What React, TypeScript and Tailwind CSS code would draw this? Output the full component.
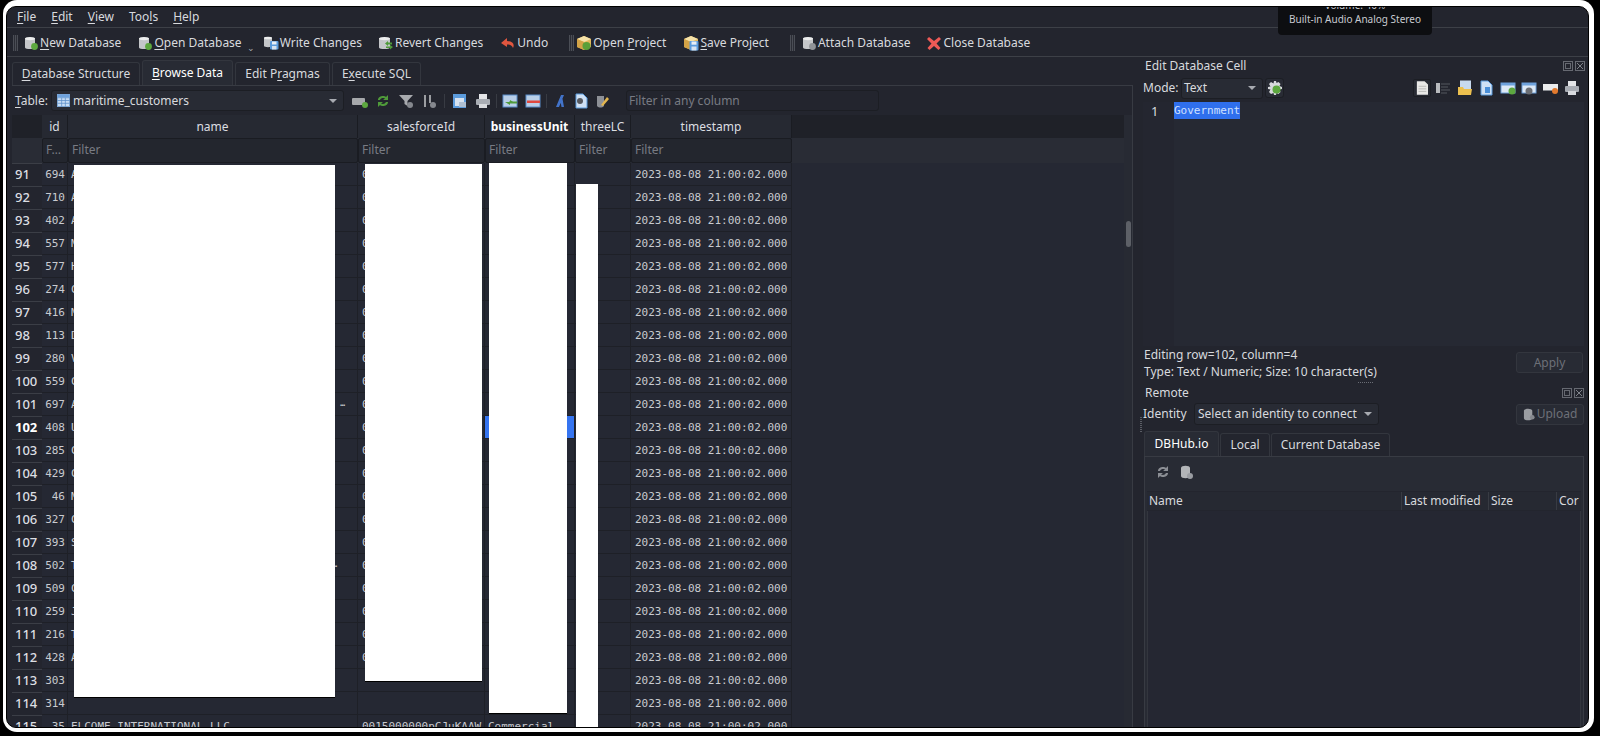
import React from "react";

const Mn: React.FC<{ children: React.ReactNode }> = ({ children }) => (
  <span className="underline underline-offset-2">{children}</span>
);

/* ---- icons ---- */
const Db: React.FC<{ badge?: string }> = ({ badge }) => (
  <svg viewBox="0 0 16 16" className="w-[16px] h-[16px] shrink-0">
    <path d="M2 3.5C2 2 12 2 12 3.5V12.5C12 14.5 2 14.5 2 12.5Z" fill="#c4c6c9" />
    <ellipse cx="7" cy="3.6" rx="5" ry="1.6" fill="#eceded" />
    {badge && <circle cx="11.5" cy="11.5" r="3.4" fill={badge} />}
  </svg>
);

const WriteIcon = () => (
  <svg viewBox="0 0 16 16" className="w-[16px] h-[16px] shrink-0">
    <path d="M1 3C1 1.8 9 1.8 9 3V11C9 12.5 1 12.5 1 11Z" fill="#c4c6c9" />
    <ellipse cx="5" cy="3" rx="4" ry="1.3" fill="#eceded" />
    <rect x="7" y="6" width="8.5" height="8.5" rx="1" fill="#5b9bdc" />
    <rect x="9" y="6.5" width="4.5" height="3" fill="#e8eef5" />
    <rect x="9" y="11" width="4.5" height="3.5" fill="#d7e3f0" />
  </svg>
);

const RevertIcon = () => (
  <svg viewBox="0 0 16 16" className="w-[16px] h-[16px] shrink-0">
    <path d="M1 3.5C1 2 12 2 12 3.5V12.5C12 14.5 1 14.5 1 12.5Z" fill="#c4c6c9" />
    <ellipse cx="6.5" cy="3.6" rx="5.5" ry="1.6" fill="#eceded" />
    <path d="M7 8.5L10 6V7.5H14V9.5H10V11ZM15 12L12 14.5V13H8V11.5H12V10Z" fill="#4f9a3a" />
  </svg>
);

const UndoIcon = () => (
  <svg viewBox="0 0 16 16" className="w-[16px] h-[16px] shrink-0">
    <path d="M7 3L1 8L7 12V9.5C10 9.5 12 10.5 13 13C15 9 12.5 6.2 7 6Z" fill="#e0563f" />
  </svg>
);

const BoxIcon: React.FC<{ badge?: boolean; save?: boolean }> = ({ badge, save }) => (
  <svg viewBox="0 0 16 16" className="w-[16px] h-[16px] shrink-0">
    <path d="M8 1L15 4V12L8 15L1 12V4Z" fill="#e2b85c" />
    <path d="M8 1L15 4L8 7L1 4Z" fill="#f6e2a8" />
    <path d="M8 7V15L1 12V4Z" fill="#d3a347" />
    {badge && <circle cx="10.5" cy="11" r="4" fill="#5a9f38" />}
    {save && (
      <g>
        <rect x="6.5" y="6" width="9" height="9.5" rx="1" fill="#5b9bdc" />
        <rect x="8.5" y="6.5" width="5" height="3.2" fill="#e8eef5" />
        <rect x="8.5" y="11.5" width="5" height="4" fill="#d7e3f0" />
      </g>
    )}
  </svg>
);

const CloseIcon = () => (
  <svg viewBox="0 0 16 16" className="w-[16px] h-[16px] shrink-0">
    <path d="M3 2L8 6L13 2L15 4L10.5 8.5L14.5 13L12.5 15L8 11L3.5 15L1.5 13L5.5 8.5L1 4Z" fill="#ee5a56" />
  </svg>
);

const Handle = () => (
  <div className="w-[5px] h-[16px] shrink-0 bg-[repeating-linear-gradient(90deg,#4b4e56_0_1px,#2c2e36_1px_2px)]" />
);

const TableIcon = () => (
  <svg viewBox="0 0 14 14" className="w-[13px] h-[13px] shrink-0">
    <rect x="0.5" y="0.5" width="13" height="13" fill="#c6dcf4" stroke="#7fa9d8" />
    <path d="M0.5 4H13.5M0.5 7H13.5M0.5 10H13.5M5 4V13.5M9 4V13.5" stroke="#5b8dc9" strokeWidth="0.8" />
    <rect x="0.5" y="0.5" width="13" height="3" fill="#6ea2dc" />
  </svg>
);

const TB = ({ children }: { children: React.ReactNode }) => (
  <svg viewBox="0 0 16 16" className="w-[16px] h-[16px] shrink-0">
    {children}
  </svg>
);

const Caret = () => (
  <svg viewBox="0 0 8 4" className="w-[8px] h-[4px] shrink-0">
    <path d="M0 0H8L4 4Z" fill="#a8abb1" />
  </svg>
);

const Sep: React.FC<{ className?: string }> = ({ className }) => (
  <div className={`w-px h-[14px] bg-[#383b43] shrink-0 ${className ?? ""}`} />
);

const RemoteDb = () => (
  <svg viewBox="0 0 16 16" className="w-[16px] h-[16px] shrink-0">
    <path d="M2 4C2 1 11 1 11 4V12C11 15 2 15 2 12Z" fill="#b3b5b8" />
    <circle cx="11" cy="12" r="3" fill="#9a9da2" />
  </svg>
);

const DockBtns = () => (
  <div className="flex items-center gap-[2px]">
    <svg viewBox="0 0 10 10" className="w-[10px] h-[10px]">
      <rect x="0.5" y="0.5" width="9" height="9" fill="none" stroke="#666971" />
      <rect x="2.5" y="2.5" width="5" height="5" fill="none" stroke="#666971" />
    </svg>
    <svg viewBox="0 0 10 10" className="w-[10px] h-[10px]">
      <rect x="0.5" y="0.5" width="9" height="9" fill="none" stroke="#666971" />
      <path d="M2 2L8 8M8 2L2 8" stroke="#80838a" />
    </svg>
  </div>
);

/* ---- toolbar ---- */
const ToolItem: React.FC<{ icon: React.ReactNode; className?: string; children: React.ReactNode }> = ({
  icon,
  className,
  children,
}) => (
  <div className={`flex items-center gap-[1px] shrink-0 ${className ?? ""}`}>
    {icon}
    <span>{children}</span>
  </div>
);

/* ---- table data ---- */
const widths = ["w-[30px]", "w-[26px]", "w-[290px]", "w-[127px]", "w-[90px]", "w-[56px]", "w-[161px]"];
const rows: { n: number; id: number; name: string; sf: string; bu?: string; dots?: string }[] = [
  { n: 91, id: 694, name: "A", sf: "0" },
  { n: 92, id: 710, name: "A", sf: "0" },
  { n: 93, id: 402, name: "A", sf: "0" },
  { n: 94, id: 557, name: "M", sf: "0" },
  { n: 95, id: 577, name: "H", sf: "0" },
  { n: 96, id: 274, name: "C", sf: "0" },
  { n: 97, id: 416, name: "M", sf: "0" },
  { n: 98, id: 113, name: "D", sf: "0" },
  { n: 99, id: 280, name: "V", sf: "0" },
  { n: 100, id: 559, name: "C", sf: "0" },
  { n: 101, id: 697, name: "A", sf: "0", dots: "pr-[12px]" },
  { n: 102, id: 408, name: "U", sf: "0" },
  { n: 103, id: 285, name: "C", sf: "0" },
  { n: 104, id: 429, name: "C", sf: "0" },
  { n: 105, id: 46, name: "M", sf: "0" },
  { n: 106, id: 327, name: "C", sf: "0" },
  { n: 107, id: 393, name: "S", sf: "0" },
  { n: 108, id: 502, name: "T", sf: "0", dots: "pr-[20px]" },
  { n: 109, id: 509, name: "C", sf: "0" },
  { n: 110, id: 259, name: "J", sf: "0" },
  { n: 111, id: 216, name: "T", sf: "0" },
  { n: 112, id: 428, name: "A", sf: "0" },
  { n: 113, id: 303, name: "", sf: "" },
  { n: 114, id: 314, name: "", sf: "" },
  { n: 115, id: 35, name: "ELCOME INTERNATIONAL LLC", sf: "0015000000pCJuKAAW", bu: "Commercial" },
];

const headers = ["", "id", "name", "salesforceId", "businessUnit", "threeLC", "timestamp"];
const filters = ["", "F…", "Filter", "Filter", "Filter", "Filter", "Filter"];

const DataTable = () => (
  <div className="relative flex-1 min-w-0 overflow-hidden">
    {/* header strip */}
    <div className="flex h-[23px] bg-[#1f2128]">
      {headers.map((h, i) => (
        <div
          key={i}
          className={`${widths[i]} shrink-0 flex items-center justify-center overflow-hidden ${
            i === 0 ? "" : "bg-[#262932] border-r border-[#1a1c22]"
          } ${i === 4 ? "font-bold text-white" : "text-[#dcdee2]"}`}
        >
          {h}
        </div>
      ))}
    </div>
    {/* filter row */}
    <div className="flex h-[25px] bg-[#292c35]">
      {filters.map((f, i) => (
        <div
          key={i}
          className={`${widths[i]} shrink-0 flex items-center overflow-hidden pl-[3px] pb-[2px] text-[#787b83] ${
            i === 0 ? "" : "bg-[#23262e] border border-[#1a1c22] rounded-[2px]"
          }`}
        >
          {f}
        </div>
      ))}
    </div>
    {/* rows */}
    <div className="bg-[#252833]">
      {rows.map((r) => (
        <div key={r.n} className="flex h-[23px] font-['DejaVu_Sans_Mono'] text-[11px] text-[#c9cbd0]">
          <div
            className={`${widths[0]} shrink-0 flex items-center pl-[3px] pb-[2px] border-t border-[#3b3e46] bg-[#23252e] font-['Noto_Sans'] text-[13px] ${
              r.n === 102 ? "font-bold text-white" : "font-medium text-[#dcdee2]"
            }`}
          >
            {r.n}
          </div>
          <div className={`${widths[1]} shrink-0 flex items-center justify-end pr-[2px] border-b border-r border-[#1e2027]`}>
            {r.id}
          </div>
          <div
            className={`${widths[2]} shrink-0 flex items-center justify-between pl-[3px] border-b border-r border-[#1e2027] ${r.dots ?? ""}`}
          >
            <span>{r.name}</span>
            {r.dots && <span className="text-[8px] font-bold">…</span>}
          </div>
          <div className={`${widths[3]} shrink-0 flex items-center pl-[4px] border-b border-r border-[#1e2027]`}>{r.sf}</div>
          <div
            className={`${widths[4]} shrink-0 flex items-center pl-[3px] border-b border-r border-[#1e2027] ${
              r.n === 102 ? "bg-[#3574f0]" : ""
            }`}
          >
            {r.bu}
          </div>
          <div className={`${widths[5]} shrink-0 border-b border-r border-[#1e2027]`} />
          <div className={`${widths[6]} shrink-0 flex items-center pl-[4px] border-b border-r border-[#1e2027]`}>
            2023-08-08 21:00:02.000
          </div>
        </div>
      ))}
    </div>
    {/* redaction boxes laid over the grid */}
    <div className="absolute left-[62px] top-[50px] w-[261px] h-[532px] bg-white shadow-[0_1px_0_#000]" />
    <div className="absolute left-[353px] top-[49px] w-[117px] h-[517px] bg-white shadow-[0_1px_0_#000]" />
    <div className="absolute left-[477px] top-[48px] w-[78px] h-[550px] bg-white shadow-[0_1px_0_#000]" />
    <div className="absolute left-[564px] top-[69px] w-[22px] h-[560px] bg-white" />
  </div>
);

const TabBtn: React.FC<{ active?: boolean; className: string; children: React.ReactNode }> = ({
  active,
  className,
  children,
}) => (
  <div
    className={`flex items-center justify-center rounded-t-[3px] border border-b-0 border-[#33363e] ${className} ${
      active ? "h-[25px] bg-[#282b34] text-white" : "h-[23px] bg-[#23252e]"
    }`}
  >
    {children}
  </div>
);

export default function App() {
  return (
    <div className="w-[1600px] h-[736px] bg-black pl-[3px] pr-[6px] pb-[4px] overflow-hidden">
      <div className="h-full bg-white rounded-[14px] pt-[6px] pl-[3px] pr-[5px] pb-[4px]">
        <div className="relative h-full border border-black rounded-[10px] overflow-hidden bg-[#23252e] text-[12px] leading-none text-[#d8dade] font-['Noto_Sans',sans-serif] flex flex-col">
          {/* volume popup from the desktop */}
          <div className="absolute left-[1271px] top-0 w-[154px] h-[28px] bg-[#0d0e11] rounded-b-[4px] overflow-hidden flex flex-col items-center text-[10px] text-[#c8cad0] z-10">
            <span className="-mt-[7px]">Volume: 40%</span>
            <span className="mt-[4px]">Built-in Audio Analog Stereo</span>
          </div>

          {/* splitter grips */}
          <div className="absolute left-[1133px] top-[410px] w-[2px] h-[15px] bg-[repeating-linear-gradient(0deg,#5a5d65_0_1px,transparent_1px_2px)]" />
          <div className="absolute left-[1351px] top-[375px] w-[15px] h-[1px] bg-[repeating-linear-gradient(90deg,#6a6d75_0_1px,transparent_1px_2px)]" />

          {/* menu bar */}
          <div className="h-[21px] shrink-0 flex items-center gap-[15px] pl-[10px] border-b border-[#3d4047]">
            <span><Mn>F</Mn>ile</span>
            <span><Mn>E</Mn>dit</span>
            <span><Mn>V</Mn>iew</span>
            <span>Too<Mn>l</Mn>s</span>
            <span><Mn>H</Mn>elp</span>
          </div>

          {/* main toolbar */}
          <div className="h-[29px] shrink-0 flex items-center pl-[6px] pt-[2px] border-b border-[#3d4047]">
            <Handle />
            <ToolItem className="ml-[5px]" icon={<Db badge="#5da83f" />}><Mn>N</Mn>ew Database</ToolItem>
            <ToolItem className="ml-[16px]" icon={<Db badge="#5da83f" />}><Mn>O</Mn>pen Database</ToolItem>
            <span className="ml-[5px] mt-[9px] text-[9px] text-[#a8abb1]">⌄</span>
            <ToolItem className="ml-[8px]" icon={<WriteIcon />}>Write Changes</ToolItem>
            <ToolItem className="ml-[16px]" icon={<RevertIcon />}>Revert Changes</ToolItem>
            <ToolItem className="ml-[17px]" icon={<UndoIcon />}>Undo</ToolItem>
            <div className="ml-[21px]"><Handle /></div>
            <ToolItem className="ml-[2px]" icon={<BoxIcon badge />}>Open <Mn>P</Mn>roject</ToolItem>
            <ToolItem className="ml-[17px]" icon={<BoxIcon save />}><Mn>S</Mn>ave Project</ToolItem>
            <div className="ml-[21px]"><Handle /></div>
            <ToolItem className="ml-[6px]" icon={<Db badge="#8f9297" />}>Attach Database</ToolItem>
            <ToolItem className="ml-[16px]" icon={<CloseIcon />}>Close Database</ToolItem>
          </div>

          {/* work area */}
          <div className="flex-1 min-h-0 flex">
            {/* browse panel */}
            <div className="w-[1126px] shrink-0 pl-[5px] flex flex-col">
              <div className="h-[28px] shrink-0 flex items-end gap-[2px] pb-0">
                <TabBtn className="w-[128px]"><span><Mn>D</Mn>atabase Structure</span></TabBtn>
                <TabBtn active className="w-[91px]"><span><Mn>B</Mn>rowse Data</span></TabBtn>
                <TabBtn className="w-[95px]"><span>Edit P<Mn>r</Mn>agmas</span></TabBtn>
                <TabBtn className="w-[89px]"><span>E<Mn>x</Mn>ecute SQL</span></TabBtn>
              </div>
              <div className="flex-1 min-h-0 flex flex-col border-t border-r border-[#383b43]">
                {/* table toolbar */}
                <div className="h-[29px] shrink-0 flex items-center pl-[3px]">
                  <span className="w-[36px]"><Mn>T</Mn>able:</span>
                  <div className="w-[293px] h-[21px] flex items-center pl-[5px] pr-[6px] bg-[#282b34] border border-[#1c1e24] rounded-[3px]">
                    <TableIcon />
                    <span className="ml-[3px] flex-1">maritime_customers</span>
                    <Caret />
                  </div>
                  <div className="ml-[8px] flex items-center gap-[7px] w-[270px]">
                    <TB>
                      <rect x="0" y="5" width="13" height="7" rx="1" fill="#a6a8ab" />
                      <circle cx="13" cy="12" r="3" fill="#5da83f" />
                    </TB>
                    <TB>
                      <path d="M3 7C3 3 9 2 11 4L13 2V7H8L10 5.5C8 4.5 6 5 5 7ZM13 9C13 13 7 14 5 12L3 14V9H8L6 10.5C8 11.5 10 11 11 9Z" fill="#4f9a3a" />
                    </TB>
                    <TB>
                      <path d="M1 2H15L9.5 8V13L6.5 11V8Z" fill="#a8aaae" />
                      <circle cx="12" cy="12" r="3" fill="#85888e" />
                    </TB>
                    <TB>
                      <path d="M3 2H5V14H3ZM8 2H10V10H8Z" fill="#9b9da1" />
                      <circle cx="12" cy="12" r="3" fill="#85888e" />
                    </TB>
                    <Sep />
                    <TB>
                      <rect x="1" y="1" width="13" height="14" fill="#5b9bdc" />
                      <rect x="3" y="5" width="9" height="8" fill="#d7e3f0" />
                      <rect x="7" y="9" width="7" height="5" fill="#aebfd2" />
                    </TB>
                    <TB>
                      <rect x="4" y="1" width="8" height="5" fill="#e4e5e8" />
                      <rect x="1" y="6" width="14" height="6" rx="1" fill="#a9adb4" />
                      <rect x="4" y="11" width="8" height="4" fill="#d8dade" />
                    </TB>
                    <Sep className="-mx-[2px]" />
                    <TB>
                      <rect x="1" y="2" width="14" height="12" fill="#b9cfe8" stroke="#5b8dc9" />
                      <path d="M3 9H8V7L12 9.5H8V12Z" fill="#4f9a3a" />
                      <rect x="7" y="8.5" width="8" height="2" fill="#4f9a3a" />
                    </TB>
                    <TB>
                      <rect x="1" y="2" width="14" height="12" fill="#b9cfe8" stroke="#5b8dc9" />
                      <rect x="2" y="7.5" width="13" height="2.5" fill="#e0483f" />
                    </TB>
                    <Sep className="-mx-[2px]" />
                    <TB>
                      <path d="M9 2H12L7 14H4ZM10 3L12 14H9.5L8 6Z" fill="#4273c9" />
                    </TB>
                    <div className="-mx-[2px]">
                      <TB>
                        <path d="M3 1H10L14 5V15H3Z" fill="#cfe1f5" stroke="#5b9bdc" />
                        <circle cx="7" cy="8" r="3" fill="#55585f" />
                      </TB>
                    </div>
                    <TB>
                      <path d="M3 3H10V13C8 15 5 15 3 13Z" fill="#8d9096" />
                      <path d="M7 12L13 4L15 6L9 13Z" fill="#e3b64f" />
                    </TB>
                  </div>
                  <div className="ml-[4px] w-[253px] h-[21px] flex items-center pl-[2px] bg-[#23252e] border border-[#1c1e24] rounded-[3px] text-[#787b83]">
                    Filter in any column
                  </div>
                </div>

                {/* grid + scrollbar */}
                <div className="flex-1 min-h-0 flex">
                  <DataTable />
                  <div className="w-[8px] shrink-0 pt-[106px] flex justify-center bg-[#272a33]">
                    <div className="w-[5px] h-[26px] rounded-full bg-[#5d6067]" />
                  </div>
                </div>
              </div>
            </div>

            {/* right dock */}
            <div className="flex-1 min-w-0 pl-[10px] pr-[3px] flex flex-col">
              <div className="h-[18px] shrink-0 flex items-center justify-between pl-[2px]">
                <span>Edit Database Cell</span>
                <DockBtns />
              </div>
              <div className="h-[26px] shrink-0 flex items-center">
                <span className="w-[38px]">Mode:</span>
                <div className="w-[82px] h-[21px] flex items-center pl-[2px] pr-[6px] justify-between border border-[#1c1e24] bg-[#282b34] rounded-[3px]">
                  <span>Text</span>
                  <Caret />
                </div>
                <div className="ml-[2px] w-[19px] h-[20px] flex items-center justify-center border border-[#1c1e24] bg-[#282b34] rounded-[3px]">
                  <svg viewBox="0 0 14 14" className="w-[14px] h-[14px]">
                    <path d="M6 0H8L8.5 2L10.5 1L12.5 3L11.5 5L14 6V8L11.5 8.5L12.5 11L10.5 13L8.5 12L8 14H6L5.5 12L3 13L1 11L2.5 8.5L0 8V6L2.5 5.5L1 3L3 1L5.5 2.5Z" fill="#d7d9dc" />
                    <circle cx="8.5" cy="8.5" r="4" fill="#5da83f" />
                  </svg>
                </div>
                <div className="flex-1 flex items-center justify-end gap-[5.5px] pr-[5px]">
                  <div className="w-[18px] h-[18px] -mr-[1px] flex items-center justify-center bg-[#282b34] border border-[#1c1e24] rounded-[2px]">
                    <svg viewBox="0 0 14 16" className="w-[12px] h-[14px]">
                      <path d="M1 0H10L14 4V16H1Z" fill="#e9e9e7" />
                      <path d="M3 6H12M3 9H12M3 12H12" stroke="#b5b5b3" />
                    </svg>
                  </div>
                  <TB>
                    <rect x="1" y="3" width="4" height="10" fill="#b8babd" />
                    <path d="M6 4H15M6 7H13M6 10H15M6 13H12" stroke="#55585f" strokeWidth="1.2" />
                  </TB>
                  <TB>
                    <rect x="3" y="0.5" width="11" height="10" fill="#c8daef" />
                    <path d="M1 7H6L7 9H15L14 15H1Z" fill="#ecc04f" />
                  </TB>
                  <TB>
                    <path d="M3 1H10L14 5V15H3Z" fill="#cfe1f5" stroke="#5b9bdc" />
                    <rect x="7" y="7" width="5" height="6" fill="#4a8fd8" />
                  </TB>
                  <TB>
                    <rect x="1" y="3" width="14" height="10" fill="#dde9f6" stroke="#6ea2dc" />
                    <rect x="1" y="3" width="14" height="2.5" fill="#6ea2dc" />
                    <circle cx="12" cy="11" r="3.5" fill="#5da83f" />
                  </TB>
                  <TB>
                    <rect x="1" y="3" width="14" height="10" fill="#dde9f6" stroke="#6ea2dc" />
                    <rect x="1" y="3" width="14" height="2.5" fill="#6ea2dc" />
                    <circle cx="8" cy="11" r="3.5" fill="#6b6e74" />
                  </TB>
                  <TB>
                    <rect x="0" y="4" width="15" height="6.5" fill="#ecedee" />
                    <circle cx="12" cy="11" r="3" fill="#e27a2e" />
                  </TB>
                  <TB>
                    <rect x="4" y="1" width="8" height="5" fill="#e4e5e8" />
                    <rect x="1" y="6" width="14" height="6" rx="1" fill="#a9adb4" />
                    <rect x="4" y="11" width="8" height="4" fill="#d8dade" />
                  </TB>
                </div>
              </div>
              {/* cell editor */}
              <div className="h-[244px] shrink-0 flex bg-[#262933] mt-[1px] w-[441px]">
                <div className="w-[31px] shrink-0 bg-[#242630] pt-[3px] pl-[8px] text-[13px]">1</div>
                <div className="flex-1 font-['DejaVu_Sans_Mono'] text-[11px]">
                  <span className="inline-block h-[17px] leading-[17px] bg-[#2f6fed] text-[#cfe0ff]">Government</span>
                </div>
              </div>
              {/* status */}
              <div className="h-[42px] shrink-0 flex w-[440px] pt-[6px]">
                <div className="flex-1 flex flex-col gap-[3px] leading-[13px] -mt-[4px] pl-[1px]">
                  <span>Editing row=102, column=4</span>
                  <span className="mt-[1px]">Type: Text / Numeric; Size: 10 character(s)</span>
                </div>
                <div className="w-[67px] h-[21px] flex items-center justify-center border border-[#33363e] bg-[#282b34] rounded-[3px] text-[#6d7078]">
                  Apply
                </div>
              </div>
              {/* remote */}
              <div className="h-[10px] shrink-0 flex items-center justify-between w-[441px] pl-[2px]">
                <span>Remote</span>
                <DockBtns />
              </div>
              <div className="h-[22px] mt-[5px] shrink-0 flex items-center w-[441px]">
                <span className="w-[51px]">Identity</span>
                <div className="w-[185px] h-[22px] flex items-center justify-between pl-[3px] pr-[6px] border border-[#1c1e24] bg-[#282b34] rounded-[3px]">
                  <span className="whitespace-nowrap">Select an identity to connect</span>
                  <Caret />
                </div>
                <div className="ml-auto w-[68px] h-[21px] flex items-center justify-center gap-[1px] border border-[#33363e] bg-[#282b34] rounded-[3px] text-[#6d7078]">
                  <svg viewBox="0 0 14 14" className="w-[13px] h-[13px]">
                    <path d="M1 3C1 0 10 0 10 3V11C10 14 1 14 1 11Z" fill="#9a9da2" />
                    <circle cx="10" cy="10" r="2.5" fill="#85888e" />
                  </svg>
                  Upload
                </div>
              </div>
              <div className="h-[31px] shrink-0 flex items-end gap-[1px] pl-[1px] w-[441px]">
                <TabBtn active className="w-[75px]"><span>DBHub.io</span></TabBtn>
                <TabBtn className="w-[50px]"><span>Local</span></TabBtn>
                <TabBtn className="w-[119px]"><span>Current Database</span></TabBtn>
              </div>
              <div className="flex-1 min-h-0 w-[440px] ml-[1px] border border-[#383b43] border-b-0 bg-[#282b34] flex flex-col pt-[3px] px-[2px]">
                <div className="h-[24px] shrink-0 flex items-center gap-[8px] pl-[8px]">
                  <TB>
                    <path d="M3 7C3 3 9 2 11 4L13 2V7H8L10 5.5C8 4.5 6 5 5 7ZM13 9C13 13 7 14 5 12L3 14V9H8L6 10.5C8 11.5 10 11 11 9Z" fill="#8b8e94" />
                  </TB>
                  <RemoteDb />
                </div>
                <div className="mt-[7px] h-[20px] shrink-0 flex items-center bg-[#262932] border-y border-[#23252e]">
                  <div className="w-[254px] pl-[2px]">Name</div>
                  <div className="w-[87px] pl-[2px] border-l border-[#383b43] h-full flex items-center">Last modified</div>
                  <div className="w-[68px] pl-[2px] border-l border-[#383b43] h-full flex items-center">Size</div>
                  <div className="flex-1 overflow-hidden pl-[2px] border-l border-[#383b43] h-full flex items-center">Cor</div>
                </div>
                <div className="flex-1 border-x border-[#33363e] bg-[#252732]" />
              </div>
            </div>
          </div>
        </div>
      </div>
    </div>
  );
}
